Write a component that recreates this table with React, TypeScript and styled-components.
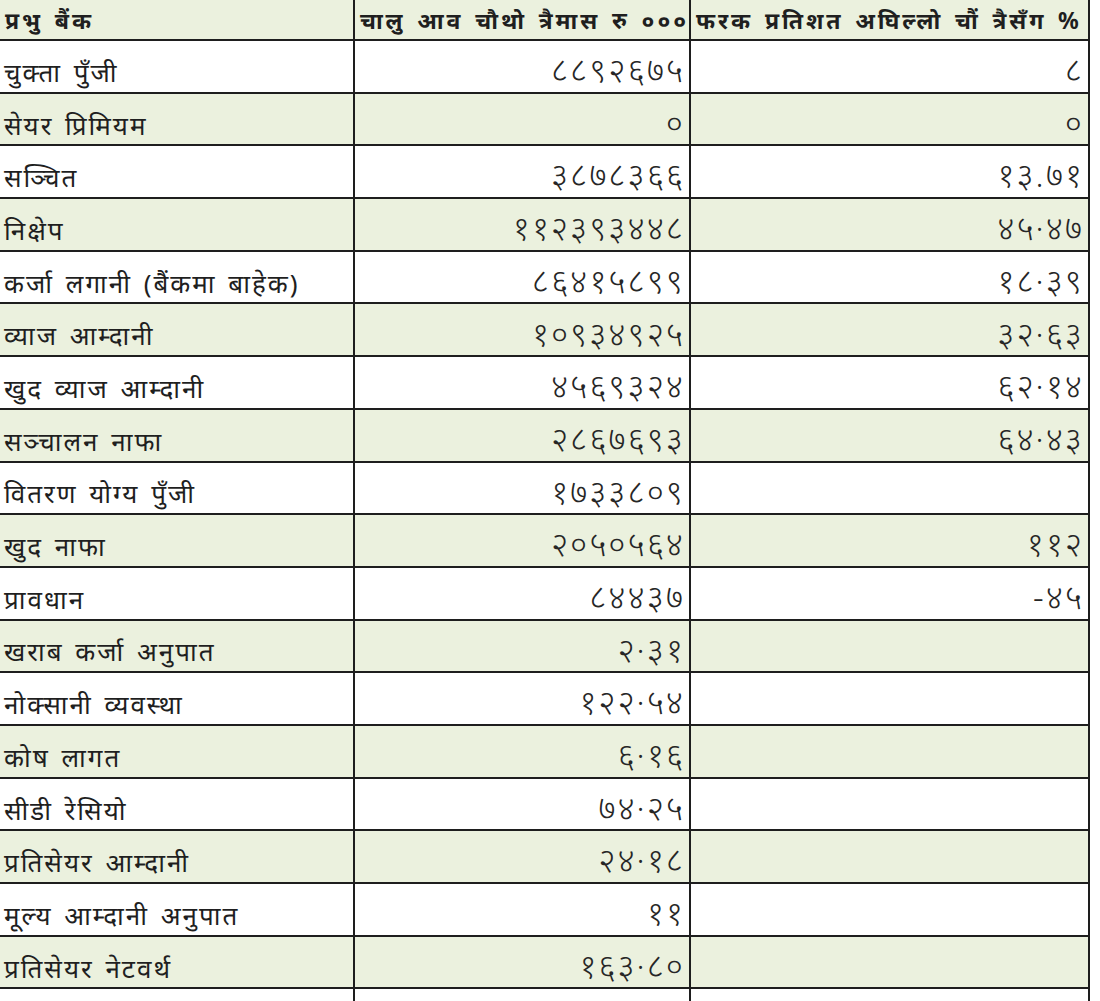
import React from "react";
import styled, { createGlobalStyle } from "styled-components";

const Global = createGlobalStyle`
  html, body { margin: 0; padding: 0; background: #ffffff; }
  body { width: 1100px; height: 1001px; overflow: hidden; }
`;

const GREEN = "#ebf1de";
const LINE = "#1e1e1e";

const Sheet = styled.div`
  width: 1100px;
  height: 1001px;
  overflow: hidden;
  background: #ffffff;
  font-family: "Noto Sans", "Lohit Devanagari", "FreeSans", "DejaVu Sans", sans-serif;
  color: #1a1a1a;
`;

const Table = styled.div`
  display: flex;
  flex-direction: column;
  width: 1090px;
`;

const Row = styled.div<{ $shade: boolean; $head?: boolean }>`
  display: grid;
  grid-template-columns: 355px 336px 399px;
  height: ${(p) => (p.$head ? "41px" : "52.7px")};
  box-sizing: border-box;
  border-bottom: 2px solid ${LINE};
  background: ${(p) => (p.$shade ? GREEN : "#ffffff")};
`;

const Cell = styled.div<{ $right?: boolean }>`
  display: flex;
  align-items: flex-end;
  justify-content: ${(p) => (p.$right ? "flex-end" : "flex-start")};
  box-sizing: border-box;
  min-width: 0;
  padding: 0 4px 2px 4px;
  border-right: 2px solid ${LINE};
  white-space: nowrap;
  line-height: 1.3;
  color: #1f1f1f;
`;

const HeadCell = styled(Cell)`
  overflow: hidden;
  padding: 0 0 3px 5px;
`;

const HeadText = styled.span`
  font-size: 23px;
  font-weight: 700;
  letter-spacing: 2.9px;
  word-spacing: 3px;
`;

const LabelText = styled.span`
  font-size: 26px;
  letter-spacing: 2px;
  word-spacing: 3px;
`;

const NumText = styled.span`
  font-size: 33px;
  font-weight: 350;
  letter-spacing: 2px;
  line-height: 1.2;
  color: #262626;
`;

type Item = { label: string; cur: string; diff: string };

const rows: Item[] = [
  { label: "चुक्ता पुँजी", cur: "८८९२६७५", diff: "८" },
  { label: "सेयर प्रिमियम", cur: "०", diff: "०" },
  { label: "सञ्चित", cur: "३८७८३६६", diff: "१३.७१" },
  { label: "निक्षेप", cur: "११२३९३४४८", diff: "४५·४७" },
  { label: "कर्जा लगानी (बैंकमा बाहेक)", cur: "८६४१५८९९", diff: "१८·३९" },
  { label: "व्याज आम्दानी", cur: "१०९३४९२५", diff: "३२·६३" },
  { label: "खुद व्याज आम्दानी", cur: "४५६९३२४", diff: "६२·१४" },
  { label: "सञ्चालन नाफा", cur: "२८६७६९३", diff: "६४·४३" },
  { label: "वितरण योग्य पुँजी", cur: "१७३३८०९", diff: "" },
  { label: "खुद नाफा", cur: "२०५०५६४", diff: "११२" },
  { label: "प्रावधान", cur: "८४४३७", diff: "-४५" },
  { label: "खराब कर्जा अनुपात", cur: "२·३१", diff: "" },
  { label: "नोक्सानी व्यवस्था", cur: "१२२·५४", diff: "" },
  { label: "कोष लागत", cur: "६·१६", diff: "" },
  { label: "सीडी रेसियो", cur: "७४·२५", diff: "" },
  { label: "प्रतिसेयर आम्दानी", cur: "२४·१८", diff: "" },
  { label: "मूल्य आम्दानी अनुपात", cur: "११", diff: "" },
  { label: "प्रतिसेयर नेटवर्थ", cur: "१६३·८०", diff: "" },
  { label: "", cur: "", diff: "" },
];

export default function App() {
  return (
    <>
      <Global />
      <Sheet>
        <Table>
          <Row $shade $head>
            <HeadCell><HeadText>प्रभु बैंक</HeadText></HeadCell>
            <HeadCell><HeadText>चालु आव चौथो त्रैमास रु ०००</HeadText></HeadCell>
            <HeadCell><HeadText>फरक प्रतिशत अघिल्लो चौं त्रैसँग %</HeadText></HeadCell>
          </Row>
          {rows.map((r, i) => (
            <Row key={i} $shade={i % 2 === 1}>
              <Cell><LabelText>{r.label}</LabelText></Cell>
              <Cell $right><NumText>{r.cur}</NumText></Cell>
              <Cell $right><NumText>{r.diff}</NumText></Cell>
            </Row>
          ))}
        </Table>
      </Sheet>
    </>
  );
}
